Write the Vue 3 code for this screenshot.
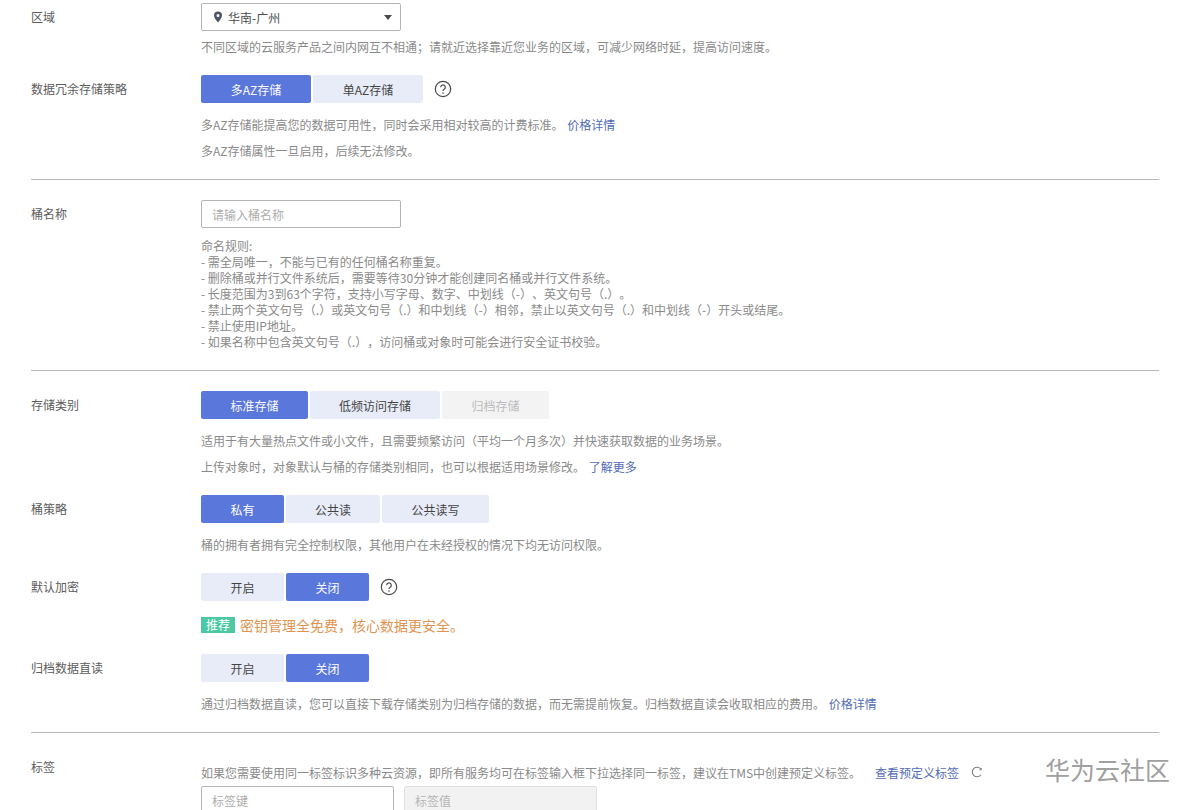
<script setup>
const rules = [
  '命名规则:',
  '- 需全局唯一，不能与已有的任何桶名称重复。',
  '- 删除桶或并行文件系统后，需要等待30分钟才能创建同名桶或并行文件系统。',
  '- 长度范围为3到63个字符，支持小写字母、数字、中划线（-）、英文句号（.）。',
  '- 禁止两个英文句号（.）或英文句号（.）和中划线（-）相邻，禁止以英文句号（.）和中划线（-）开头或结尾。',
  '- 禁止使用IP地址。',
  '- 如果名称中包含英文句号（.），访问桶或对象时可能会进行安全证书校验。'
]
</script>

<template>
  <div class="page">
    <div class="row r-region">
      <div class="label">区域</div>
      <div class="body">
        <div class="select">
          <svg class="pin" width="10" height="12" viewBox="0 0 10 12"><path fill-rule="evenodd" fill="#4d5566" d="M5 0.5a4 4 0 0 1 4 4c0 2.6-2.6 5.2-4 7-1.400-1.800-4-4.400-4-7a4 4 0 0 1 4-4zM5 3a1.500 1.500 0 1 0 0 3a1.500 1.500 0 0 0 0-3z"/></svg>
          <span class="sel-text">华南-广州</span>
          <span class="caret"></span>
        </div>
        <p class="help region-help">不同区域的云服务产品之间内网互不相通；请就近选择靠近您业务的区域，可减少网络时延，提高访问速度。</p>
      </div>
    </div>

    <div class="row r-az">
      <div class="label">数据冗余存储策略</div>
      <div class="body">
        <div class="btns">
          <button class="btn on w110">多AZ存储</button>
          <button class="btn w110">单AZ存储</button>
          <svg class="q" width="18" height="18" viewBox="0 0 18 18"><circle cx="9" cy="9" r="7.700" fill="none" stroke="#4a4a4a" stroke-width="1.200"/><path d="M6.700 7.200a2.300 2.300 0 1 1 3.500 2c-.8.500-1.200.9-1.200 1.800" fill="none" stroke="#4a4a4a" stroke-width="1.200"/><circle cx="9" cy="13" r=".8" fill="#4a4a4a"/></svg>
        </div>
        <p class="help first">多AZ存储能提高您的数据可用性，同时会采用相对较高的计费标准。 <a class="link">价格详情</a></p>
        <p class="help next">多AZ存储属性一旦启用，后续无法修改。</p>
      </div>
    </div>

    <hr class="rule hr1" />

    <div class="row r-name">
      <div class="label">桶名称</div>
      <div class="body">
        <div class="input w200">请输入桶名称</div>
        <div class="rules">
          <div v-for="line in rules" :key="line">{{ line }}</div>
        </div>
      </div>
    </div>

    <hr class="rule hr2" />

    <div class="row r-class">
      <div class="label">存储类别</div>
      <div class="body">
        <div class="btns">
          <button class="btn on w107">标准存储</button>
          <button class="btn w130">低频访问存储</button>
          <button class="btn off w107">归档存储</button>
        </div>
        <p class="help first">适用于有大量热点文件或小文件，且需要频繁访问（平均一个月多次）并快速获取数据的业务场景。</p>
        <p class="help next">上传对象时，对象默认与桶的存储类别相同，也可以根据适用场景修改。 <a class="link">了解更多</a></p>
      </div>
    </div>

    <div class="row r-policy">
      <div class="label">桶策略</div>
      <div class="body">
        <div class="btns">
          <button class="btn on w83">私有</button>
          <button class="btn w94">公共读</button>
          <button class="btn w107">公共读写</button>
        </div>
        <p class="help first">桶的拥有者拥有完全控制权限，其他用户在未经授权的情况下均无访问权限。</p>
      </div>
    </div>

    <div class="row r-enc">
      <div class="label">默认加密</div>
      <div class="body">
        <div class="btns">
          <button class="btn w83">开启</button>
          <button class="btn on w83">关闭</button>
          <svg class="q" width="18" height="18" viewBox="0 0 18 18"><circle cx="9" cy="9" r="7.700" fill="none" stroke="#4a4a4a" stroke-width="1.200"/><path d="M6.700 7.200a2.300 2.300 0 1 1 3.500 2c-.8.500-1.200.9-1.200 1.800" fill="none" stroke="#4a4a4a" stroke-width="1.200"/><circle cx="9" cy="13" r=".8" fill="#4a4a4a"/></svg>
        </div>
        <div class="promo"><span class="tag">推荐</span><span class="promo-text">密钥管理全免费，核心数据更安全。</span></div>
      </div>
    </div>

    <div class="row r-arch">
      <div class="label">归档数据直读</div>
      <div class="body">
        <div class="btns">
          <button class="btn w83">开启</button>
          <button class="btn on w83">关闭</button>
        </div>
        <p class="help first">通过归档数据直读，您可以直接下载存储类别为归档存储的数据，而无需提前恢复。归档数据直读会收取相应的费用。 <a class="link">价格详情</a></p>
      </div>
    </div>

    <hr class="rule hr3" />

    <div class="row r-tag">
      <div class="label">标签</div>
      <div class="body">
        <div class="tag-help">
          <span>如果您需要使用同一标签标识多种云资源，即所有服务均可在标签输入框下拉选择同一标签，建议在TMS中创建预定义标签。</span>
          <a class="link view">查看预定义标签</a>
          <svg class="refresh" width="12" height="12" viewBox="0 0 12 12"><path d="M10 3.200A4.800 4.800 0 1 0 10 8.800" fill="none" stroke="#7d7d7d" stroke-width="1.100"/><path d="M10.700 1.500v2.700H8z" fill="#7d7d7d"/></svg>
        </div>
        <div class="tag-inputs">
          <div class="input w193">标签键</div>
          <div class="input w193 dis">标签值</div>
        </div>
      </div>
    </div>

    <div class="mark">华为云社区</div>
  </div>
</template>

<style>
html, body { margin: 0; background: #fff; overflow: hidden; }
</style>

<style scoped>
.page {
  position: relative;
  box-sizing: border-box;
  height: 810px;
  overflow: hidden;
  padding: 3px 32px 0 31px;
  font-family: "Noto Sans CJK SC", "Noto Sans", sans-serif;
  font-size: 12px;
  text-spacing-trim: space-all;
  color: #4d4d4d;
  background: #fff;
}
.row { display: flex; align-items: flex-start; }
.label { width: 170px; flex: none; line-height: 28px; color: #5c5c5c; }
.body { flex: 1; min-width: 0; }
.select, .input {
  box-sizing: border-box;
  height: 28px;
  border: 1px solid #b4b4b4;
  border-radius: 2px;
  display: flex;
  align-items: center;
  background: #fff;
}
.select { width: 200px; padding: 0 8px 0 11px; color: #4d4d4d; }
.pin { flex: none; margin-right: 5px; }
.sel-text { flex: 1; }
.caret { width: 0; height: 0; border: 4px solid transparent; border-top: 5px solid #4a4a4a; border-bottom: 0; }
.input { padding: 0 10px; color: #adadad; }
.w200 { width: 200px; }
.w193 { width: 193px; }
.dis { background: #f2f2f2; border-color: #e0e0e0; color: #b5b5b5; }
.help { margin: 0; line-height: 16px; color: #8a8a8a; }
.help.region-help { margin-top: 8px; }
.help.first { margin-top: 14px; }
.help.next { margin-top: 10px; }
.link { color: #526bb5; margin-left: 1px; }
.btns { display: flex; align-items: center; gap: 2px; height: 28px; }
.btn {
  box-sizing: border-box;
  height: 28px;
  padding: 0;
  border: 0;
  border-radius: 2px;
  background: #e8ecf8;
  color: #444;
  font: inherit;
}
.btn.on { background: #5a77dc; color: #fff; }
.btn.off { background: #f3f3f3; color: #bcbcbc; }
.w110 { width: 110px; }
.w107 { width: 107px; }
.w130 { width: 130px; }
.w83 { width: 83px; }
.w94 { width: 94px; }
.q { margin-left: 9px; }
.r-az { margin-top: 20px; }
.rule { margin: 0; border: 0; border-top: 1px solid #b9b9b9; }
.hr1 { margin-top: 20px; }
.r-name { margin-top: 20px; }
.rules { margin-top: 10px; line-height: 16px; color: #8a8a8a; }
.hr2 { margin-top: 20px; }
.r-class { margin-top: 20px; }
.r-policy { margin-top: 20px; }
.r-enc { margin-top: 20px; }
.promo { display: flex; align-items: center; margin-top: 16px; height: 16px; }
.tag { width: 34px; height: 16px; line-height: 16px; text-align: center; background: #4cc9a4; color: #fff; margin-right: 5px; }
.promo-text { font-size: 14px; color: #df9350; }
.r-arch { margin-top: 21px; }
.hr3 { margin-top: 20px; }
.r-tag { margin-top: 20px; }
.tag-help { display: flex; align-items: center; height: 16px; margin-top: 11px; color: #8a8a8a; }
.view { margin-left: 14px; }
.refresh { margin-left: 12px; }
.tag-inputs { display: flex; gap: 10px; margin-top: 6px; }
.mark {
  position: absolute;
  right: 21px;
  top: 754px;
  font-size: 25px;
  line-height: 30px;
  color: #a0a0a0;
}
</style>
